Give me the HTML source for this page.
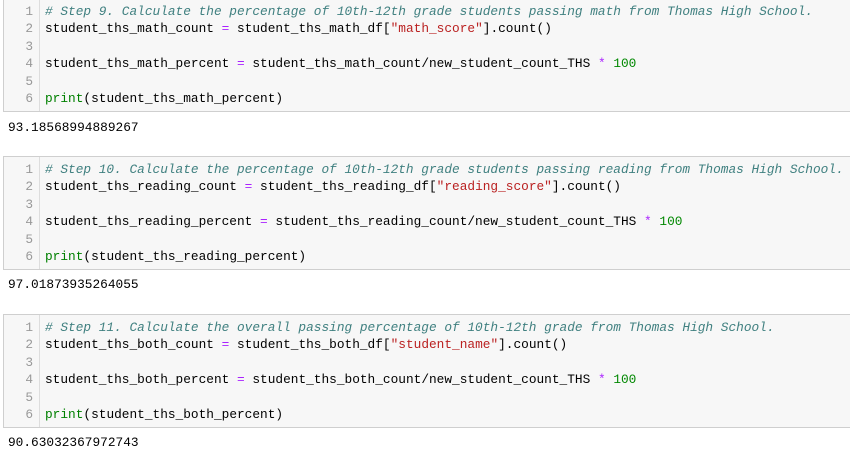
<!DOCTYPE html>
<html><head><style>
body{margin:0;width:850px;height:459px;overflow:hidden;background:#fff;font-family:"Liberation Mono",monospace;font-size:12.8px;}
.cell{position:absolute;left:3px;width:860px;height:114px;background:#f7f7f7;border:1px solid #cfcfcf;box-sizing:border-box;}
.gut{position:absolute;left:0;top:0;bottom:0;width:35px;border-right:1px solid #ddd;}
.ln{position:absolute;left:0;width:29px;text-align:right;color:#999;line-height:17.4px;}
.code{position:absolute;left:41px;white-space:pre;line-height:17.4px;color:#000;}
.c{color:#408080;font-style:italic}.s{color:#ba2121}.o{color:#aa22ff}.n{color:#080}.b{color:#008000}
.out{position:absolute;left:8px;white-space:pre;line-height:17px;}
</style></head><body>
<div class="cell" style="top:-2px">
<div class="gut"></div>
<div class="ln" style="top:4px">1<br>2<br>3<br>4<br>5<br>6</div>
<div class="code" style="top:4px"><span class="c"># Step 9. Calculate the percentage of 10th-12th grade students passing math from Thomas High School.</span>
student_ths_math_count <span class="o">=</span> student_ths_math_df[<span class="s">"math_score"</span>].count()

student_ths_math_percent <span class="o">=</span> student_ths_math_count/new_student_count_THS <span class="o">*</span> <span class="n">100</span>

<span class="b">print</span>(student_ths_math_percent)</div></div>
<div class="out" style="top:119px">93.18568994889267</div>

<div class="cell" style="top:156px">
<div class="gut"></div>
<div class="ln" style="top:4px">1<br>2<br>3<br>4<br>5<br>6</div>
<div class="code" style="top:4px"><span class="c"># Step 10. Calculate the percentage of 10th-12th grade students passing reading from Thomas High School.</span>
student_ths_reading_count <span class="o">=</span> student_ths_reading_df[<span class="s">"reading_score"</span>].count()

student_ths_reading_percent <span class="o">=</span> student_ths_reading_count/new_student_count_THS <span class="o">*</span> <span class="n">100</span>

<span class="b">print</span>(student_ths_reading_percent)</div></div>
<div class="out" style="top:276px">97.01873935264055</div>

<div class="cell" style="top:314px">
<div class="gut"></div>
<div class="ln" style="top:4px">1<br>2<br>3<br>4<br>5<br>6</div>
<div class="code" style="top:4px"><span class="c"># Step 11. Calculate the overall passing percentage of 10th-12th grade from Thomas High School.</span>
student_ths_both_count <span class="o">=</span> student_ths_both_df[<span class="s">"student_name"</span>].count()

student_ths_both_percent <span class="o">=</span> student_ths_both_count/new_student_count_THS <span class="o">*</span> <span class="n">100</span>

<span class="b">print</span>(student_ths_both_percent)</div></div>
<div class="out" style="top:434px">90.63032367972743</div>
</body></html>
